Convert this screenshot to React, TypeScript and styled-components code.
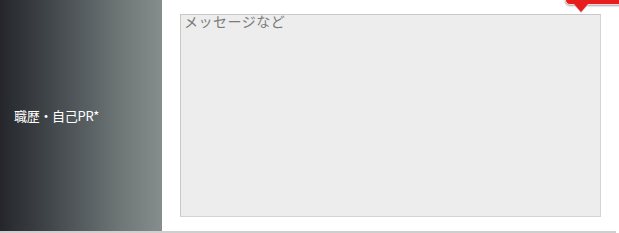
import styled, { createGlobalStyle } from "styled-components";

const GlobalStyle = createGlobalStyle`
    body {
        margin: 0;
        background: #fff;
        font-family: "Noto Sans CJK JP", "Liberation Sans", sans-serif;
    }
`;

const FormRow = styled.div`
    display: flex;
    width: 616px;
    border-bottom: 2px solid #cfcfcf;
`;

const LabelCell = styled.div`
    display: flex;
    align-items: center;
    width: 148px;
    padding-left: 14px;
    background: linear-gradient(to right, #24262b 0%, #4a5054 40%, #6f7777 75%, #868e8d 100%);
    color: #fff;
    font-size: 13px;
    letter-spacing: -0.3px;
`;

const FieldCell = styled.div`
    position: relative;
    flex: 1;
    padding: 14px 15px 14px 18px;
`;

const Message = styled.textarea`
    display: block;
    box-sizing: border-box;
    width: 421px;
    height: 203px;
    margin: 0;
    padding: 0 3px;
    resize: none;
    border: 1px solid #c8c8c8;
    border-right-color: #d4d4d4;
    border-bottom-color: #d4d4d4;
    background: #ededed;
    font-family: "Noto Sans CJK JP", "Liberation Sans", sans-serif;
    font-size: 14px;
    line-height: 12px;
    color: #333;

    &::placeholder {
        color: #7a7a7a;
        letter-spacing: 0.5px;
    }
`;

const ErrorBubble = styled.div`
    position: absolute;
    top: -20px;
    left: 403px;
    width: 60px;
    height: 23px;
    background: #e81d1d;
    border: 1px solid #f4d6d6;
    border-radius: 5px;
    box-shadow: 0 1px 2px rgba(0, 0, 0, 0.35);

    &::after {
        content: "";
        position: absolute;
        left: 8px;
        bottom: -8px;
        width: 0;
        height: 0;
        border-left: 7px solid transparent;
        border-right: 7px solid transparent;
        border-top: 8px solid #e81d1d;
        filter: drop-shadow(0 1px 0 #c9c9c9);
    }
`;

function App() {
    return (
        <>
            <GlobalStyle />
            <FormRow>
                <LabelCell>職歴・自己PR*</LabelCell>
                <FieldCell>
                    <ErrorBubble />
                    <Message placeholder="メッセージなど" />
                </FieldCell>
            </FormRow>
        </>
    );
}

export default App;
